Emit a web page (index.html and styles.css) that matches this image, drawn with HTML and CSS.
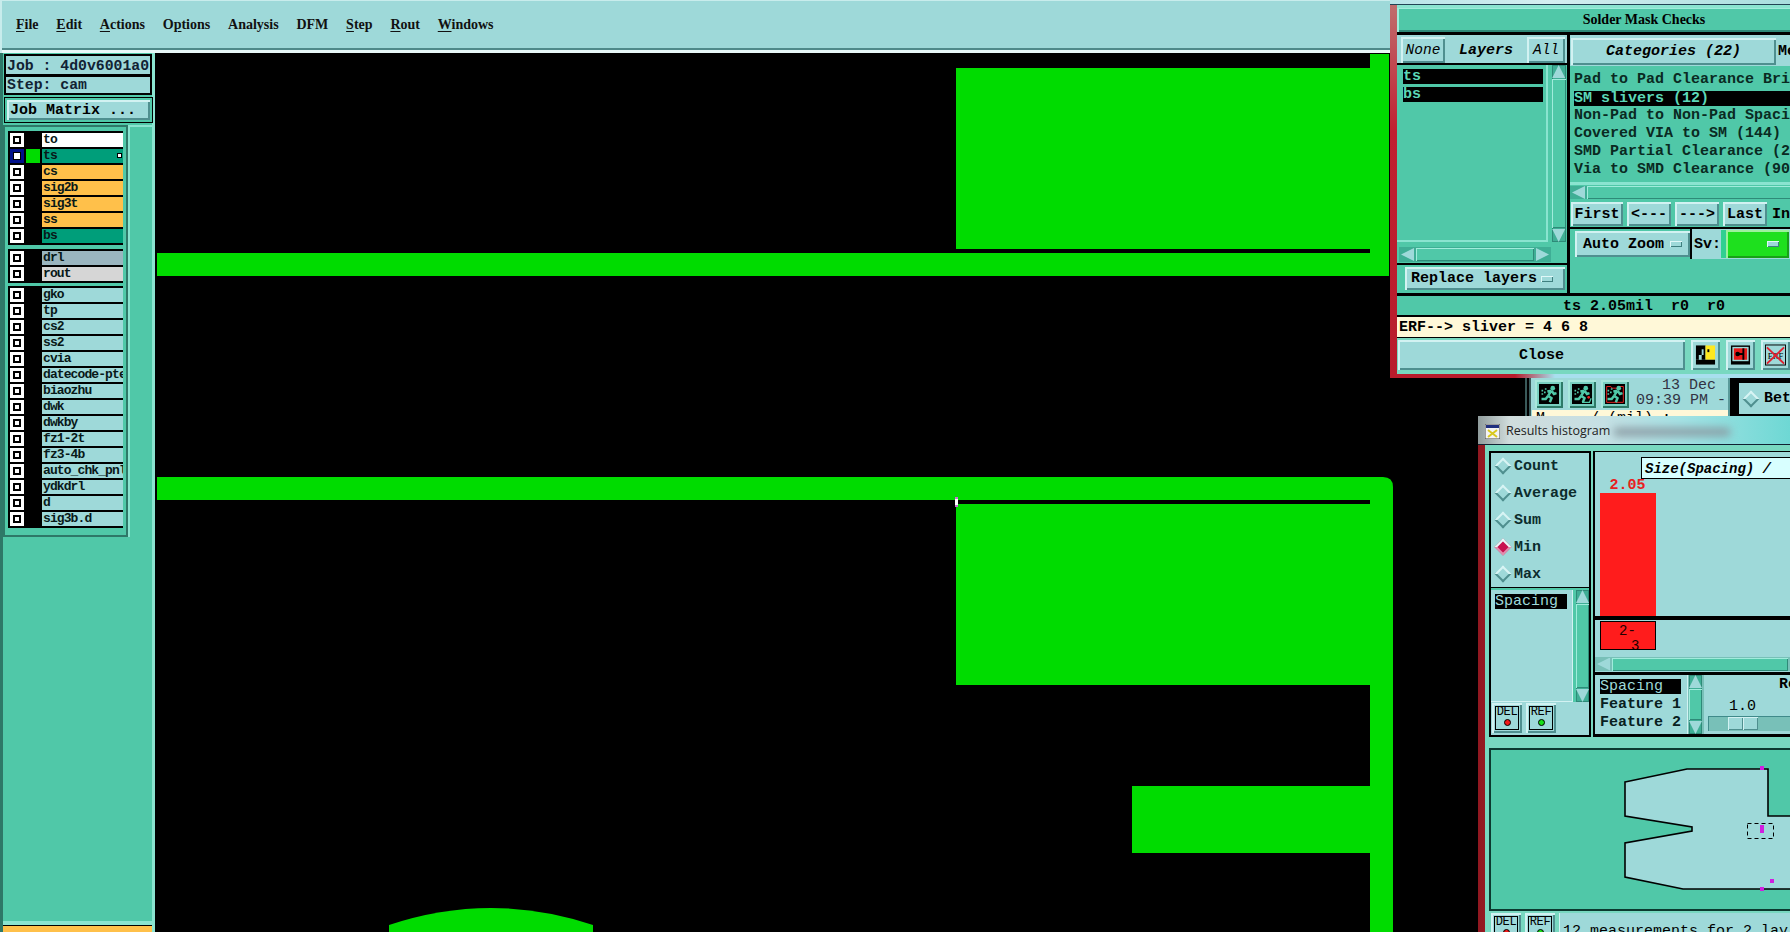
FILE: index.html
```html
<!DOCTYPE html>
<html lang="en">
<head>
<meta charset="utf-8">
<title>Solder Mask Checks</title>
<link rel="stylesheet" href="styles.css">
</head>
<body>
<svg class="defs" width="0" height="0" aria-hidden="true">
  <symbol id="runner" viewBox="0 0 24 24">
    <circle cx="16.5" cy="5" r="2.8" fill="#50c8a8"/>
    <path d="M15 8 11 14M15 8l3 4 3-1M15 8 10 9M11 14l4 3-2 5M11 14l-3 4H3" fill="none" stroke="#50c8a8" stroke-width="3"/>
    <path d="M3 7h2v2H3zM6 9h2v2H6zM3 11h2v2H3zM7 5h2v2H7z" fill="#50c8a8"/>
  </symbol>
</svg>

<div class="app">
  <header class="menubar">
    <span><u>F</u>ile</span><span><u>E</u>dit</span><span><u>A</u>ctions</span><span>O<u>p</u>tions</span><span>Analysis</span><span>DFM</span><span><u>S</u>tep</span><span><u>R</u>out</span><span><u>W</u>indows</span>
  </header>
  <aside class="sidebar">
    <div class="info">
      <div class="info-row">Job : 4d0v6001a0</div>
      <div class="info-row">Step: cam</div>
    </div>
    <div class="matrix"><div class="btn matrix-btn">Job Matrix ...</div></div>
    <div class="layers-wrap">
      <div class="layers">
        <div class="group">
          <div class="row"><i class="check"></i><i class="swatch"></i><b class="name c-white">to</b></div>
          <div class="row"><i class="check sel"></i><i class="swatch on"></i><b class="name c-teal">ts<em class="mark"></em></b></div>
          <div class="row"><i class="check"></i><i class="swatch"></i><b class="name c-orange">cs</b></div>
          <div class="row"><i class="check"></i><i class="swatch"></i><b class="name c-orange">sig2b</b></div>
          <div class="row"><i class="check"></i><i class="swatch"></i><b class="name c-orange">sig3t</b></div>
          <div class="row"><i class="check"></i><i class="swatch"></i><b class="name c-orange">ss</b></div>
          <div class="row"><i class="check"></i><i class="swatch"></i><b class="name c-teal">bs</b></div>
        </div>
        <div class="group">
          <div class="row"><i class="check"></i><i class="swatch"></i><b class="name c-slate">drl</b></div>
          <div class="row"><i class="check"></i><i class="swatch"></i><b class="name c-grey">rout</b></div>
        </div>
        <div class="group group-last">
          <div class="row"><i class="check"></i><i class="swatch"></i><b class="name">gko</b></div>
          <div class="row"><i class="check"></i><i class="swatch"></i><b class="name">tp</b></div>
          <div class="row"><i class="check"></i><i class="swatch"></i><b class="name">cs2</b></div>
          <div class="row"><i class="check"></i><i class="swatch"></i><b class="name">ss2</b></div>
          <div class="row"><i class="check"></i><i class="swatch"></i><b class="name">cvia</b></div>
          <div class="row"><i class="check"></i><i class="swatch"></i><b class="name">datecode-pte</b></div>
          <div class="row"><i class="check"></i><i class="swatch"></i><b class="name">biaozhu</b></div>
          <div class="row"><i class="check"></i><i class="swatch"></i><b class="name">dwk</b></div>
          <div class="row"><i class="check"></i><i class="swatch"></i><b class="name">dwkby</b></div>
          <div class="row"><i class="check"></i><i class="swatch"></i><b class="name">fz1-2t</b></div>
          <div class="row"><i class="check"></i><i class="swatch"></i><b class="name">fz3-4b</b></div>
          <div class="row"><i class="check"></i><i class="swatch"></i><b class="name">auto_chk_pnl</b></div>
          <div class="row"><i class="check"></i><i class="swatch"></i><b class="name">ydkdrl</b></div>
          <div class="row"><i class="check"></i><i class="swatch"></i><b class="name">d</b></div>
          <div class="row"><i class="check"></i><i class="swatch"></i><b class="name">sig3b.d</b></div>
        </div>
      </div>
      <div class="layers-side"></div>
    </div>
    <div class="side-foot"></div>
  </aside>
  <main class="canvas">
    <svg class="board" viewBox="155 53 1635 879" shape-rendering="crispEdges" aria-hidden="true">
      <g fill="#00dc00">
        <rect x="956" y="68" width="414" height="181"/>
        <rect x="1370" y="54" width="19" height="222"/>
        <rect x="157" y="253" width="1232" height="23"/>
        <path d="M157 477H1383Q1393 477 1393 487V932H1370V853H1132V786H1370V685H956V504H1370V500H157Z" shape-rendering="auto"/>
        <path d="M389 932V925Q491 891 593 925V932Z" shape-rendering="auto"/>
      </g>
      <rect x="955" y="497" width="3" height="10" fill="#c070d0"/>
      <rect x="955" y="499" width="3" height="6" fill="#fff"/>
    </svg>
  </main>
</div>

<section class="backwin">
  <div class="backstripes"></div>
  <div class="backmain">
    <div class="backtop">
      <div class="iconbtn"><svg viewBox="0 0 24 24"><rect width="24" height="24"/><use href="#runner"/></svg></div>
      <div class="iconbtn"><svg viewBox="0 0 24 24"><rect width="24" height="24"/><use href="#runner"/><path d="M12 22h9l2-5" fill="none" stroke="#50c8a8" stroke-width="1.5"/><circle cx="20" cy="16" r="1.6" fill="#f02020"/></svg></div>
      <div class="iconbtn"><svg viewBox="0 0 24 24"><rect width="24" height="24"/><path d="M2 3h5l1 2h7l1-2h6v19H2z" fill="none" stroke="#e02020" stroke-width="1.2"/><use href="#runner"/></svg></div>
      <div class="datebox"><div class="date1">13 Dec</div><div>09:39 PM -</div></div>
    </div>
    <div class="backnote">M     / (mil) :</div>
  </div>
  <div class="betw"><i class="diamond"></i><b>Betw</b></div>
</section>

<section class="solder">
  <div class="glass"></div>
  <div class="solder-in">
    <div class="title">Solder Mask Checks</div>
    <div class="solder-body">
      <div class="s-left">
        <div class="s-head">
          <div class="btn mini it">None</div>
          <div class="s-head-label">Layers</div>
          <div class="btn mini all it">All</div>
        </div>
        <div class="s-listarea">
          <div class="s-list">
            <div class="hl">ts</div>
            <div class="hl">bs</div>
          </div>
          <div class="vscroll"><i class="arr up"></i><i class="thumb"></i><i class="arr down"></i></div>
        </div>
        <div class="hscroll short"><i class="arr left"></i><i class="thumb"></i><i class="arr right"></i></div>
        <div class="replace"><div class="btn opt replace-btn">Replace layers<i class="dash"></i></div></div>
      </div>
      <div class="s-right">
        <div class="cat-head"><div class="btn cat-btn">Categories (22)</div><span class="cut">Me</span></div>
        <div class="cat-list">
          <div>Pad to Pad Clearance Bri</div>
          <div class="hl wide">SM slivers (12)</div>
          <div>Non-Pad to Non-Pad Spaci</div>
          <div>Covered VIA to SM (144)</div>
          <div>SMD Partial Clearance (2</div>
          <div>Via to SMD Clearance (90</div>
        </div>
        <div class="hscroll"><i class="arr left"></i><i class="thumb"></i></div>
        <div class="navrow">
          <div class="btn nav n1">First</div><div class="btn nav n2">&lt;---</div><div class="btn nav n2">---&gt;</div><div class="btn nav n3">Last</div><span class="cut">In</span>
        </div>
        <div class="zoomrow">
          <div class="zoomcell"><div class="btn opt zoom-btn">Auto Zoom<i class="dash"></i></div></div>
          <div class="svcell"><span>Sv:</span><div class="btn opt sv-btn"><i class="dash"></i></div></div>
        </div>
        <div class="s-fill"></div>
      </div>
    </div>
    <div class="status">ts 2.05mil  r0  r0</div>
    <div class="erf">ERF--&gt; sliver = 4 6 8</div>
    <div class="s-foot">
      <div class="btn close">Close</div>
      <div class="iconbtn big"><svg viewBox="0 0 22 22"><rect width="22" height="22" fill="#9ed9d9"/><rect x="1" y="1" width="10" height="15"/><rect x="11" y="1" width="10" height="15" fill="#ffe820"/><rect x="1" y="16" width="20" height="5"/><rect x="13" y="5" width="2" height="3"/><rect x="7" y="5" width="2" height="6" fill="#9ed9d9"/><rect x="4" y="11" width="3" height="5" fill="#9ed9d9"/></svg></div>
      <div class="iconbtn big"><svg viewBox="0 0 22 22"><rect width="22" height="22" fill="#9ed9d9"/><rect x="1" y="1" width="20" height="20"/><rect x="2.5" y="2.5" width="17" height="15" fill="#9ed9d9"/><rect x="4" y="4" width="14" height="12" fill="#e81818"/><circle cx="8" cy="10" r="2.4"/><rect x="13" y="4" width="2" height="12"/><rect x="8" y="9" width="6" height="2"/></svg></div>
      <div class="iconbtn big"><svg viewBox="0 0 22 22"><rect width="22" height="22" fill="#9ed9d9"/><rect x=".5" y=".5" width="21" height="21" fill="none" stroke="#000"/><text x="11" y="15" text-anchor="middle" class="erf-txt">ERF</text><path d="M2 3 20 20M20 3 2 20" stroke="#e02030" stroke-width="2"/></svg></div>
    </div>
  </div>
</section>

<section class="hist">
  <div class="hist-title">
    <svg class="winicon" viewBox="0 0 15 15" aria-hidden="true"><rect width="15" height="15" fill="#f4f4f4" stroke="#444"/><rect x="1" y="1" width="13" height="3" fill="#203080"/><path d="M3 6 12 13M12 6 3 13" stroke="#d8c820" stroke-width="2"/></svg>
    <span>Results histogram</span>
    <i class="blur"></i>
  </div>
  <div class="hist-in">
    <div class="hist-top">
      <div class="h-left">
        <div class="radios">
          <label class="radio"><i class="diamond"></i>Count</label>
          <label class="radio"><i class="diamond"></i>Average</label>
          <label class="radio"><i class="diamond"></i>Sum</label>
          <label class="radio"><i class="diamond on"></i>Min</label>
          <label class="radio"><i class="diamond"></i>Max</label>
        </div>
        <div class="h-listbox">
          <div class="h-listarea">
            <div class="h-list"><div class="hl-b">Spacing</div></div>
            <div class="vscroll tealbar"><i class="arr up"></i><i class="thumb"></i><i class="arr down"></i></div>
          </div>
          <div class="delref">
            <div class="tool"><div class="tool-in">DEL<i class="dot red"></i></div></div>
            <div class="tool"><div class="tool-in">REF<i class="dot green"></i></div></div>
          </div>
        </div>
      </div>
      <div class="h-right">
        <div class="chart">
          <div class="chart-title">Size(Spacing) / </div>
          <div class="bar-col">
            <div class="bar-val">2.05</div>
            <div class="bar"></div>
          </div>
        </div>
        <div class="axis"><div class="axis-cell"><span>2-</span><span class="line2">3</span></div></div>
        <div class="hscroll lightbar"><i class="arr left"></i><i class="thumb"></i></div>
        <div class="h-bottom">
          <div class="sel-list">
            <div class="hl-b">Spacing</div>
            <div>Feature 1</div>
            <div>Feature 2</div>
          </div>
          <div class="vscroll tealbar small"><i class="arr up"></i><i class="thumb"></i><i class="arr down"></i></div>
          <div class="range">
            <div class="range-top"><span class="r-head">Re</span></div>
            <div class="range-val">1.0</div>
            <div class="slider"><i class="slider-th"></i><i class="slider-th"></i></div>
          </div>
        </div>
      </div>
    </div>
    <div class="preview">
      <svg viewBox="1490 748 300 160" aria-hidden="true">
        <path d="M1625 782 1687 769H1768V816H1800V889H1683L1625 877V843L1692 831V827L1625 816Z" fill="#9ed9d9" stroke="#000" stroke-width="1.6"/>
        <rect x="1747.5" y="823.5" width="26" height="15" fill="none" stroke="#000" stroke-dasharray="4 3"/>
        <g fill="#d020e0">
          <rect x="1760" y="766" width="4" height="4"/>
          <rect x="1760" y="825" width="4" height="4"/>
          <rect x="1760" y="829" width="4" height="4"/>
          <rect x="1770" y="879" width="4" height="4"/>
          <rect x="1760" y="887" width="4" height="4"/>
        </g>
      </svg>
    </div>
    <div class="h-foot">
      <div class="tool"><div class="tool-in">DEL<i class="dot red"></i></div></div>
      <div class="tool"><div class="tool-in">REF<i class="dot green"></i></div></div>
      <div class="measure">12 measurements for 2 lay</div>
    </div>
  </div>
</section>
</body>
</html>
```
FILE: styles.css
```css
* { box-sizing: border-box; }
html, body { margin: 0; padding: 0; height: 100%; overflow: hidden; background: #000; }
body { width: 1790px; height: 932px; position: relative; font: bold 15px/1 "Liberation Mono", monospace; color: #000; }
i, em { display: block; font-style: normal; }
.defs { position: absolute; }

.app { display: grid; grid-template-columns: 155px 1fr; grid-template-rows: 53px 879px; height: 932px; }

.menubar {
  grid-column: 1 / 3; display: flex; gap: 17.8px; align-items: center;
  padding: 0 0 5px 14px; background: #9ed9d9;
  border-top: 1px solid #c8ecec; border-left: 2px solid #c8ecec;
  box-shadow: inset 0 -3px 0 #e8f8f8, inset 0 -5px 0 #4f8a8a;
  font: bold 14px/1 "Liberation Serif", serif; color: #111;
}
.menubar u { text-underline-offset: 2px; }

.btn { display: flex; align-items: center; justify-content: center; background: #9ed9d9;
  box-shadow: inset 2px 2px 0 #d2f2f2, inset -2px -2px 0 #4f8f8f; }

/* sidebar */
.sidebar { display: flex; flex-direction: column; background: #50c8a8; border-right: 3px solid #8ae4d0; border-left: 3px solid #2e7868; }
.info { margin: 1px 0 0 1px; width: 148px; border: 1px solid #000; background: #000; display: flex; flex-direction: column; gap: 1px; }
.info-row { height: 20px; padding: 2px 0 0 1px; display: flex; align-items: center; white-space: pre; background: #9ed9d9; font-size: 14.8px; border: 1px solid #000; color: #123; }
.info-row + .info-row { height: 18px; padding-top: 0; }
.matrix { margin: 2px 0 0 1px; width: 149px; height: 26px; padding: 2px; border: 1px solid #000; background: #50c8a8; }
.matrix-btn { width: 100%; height: 100%; justify-content: flex-start; padding-left: 3px; white-space: pre; }
.layers-wrap { display: flex; margin-top: 2px; }
.layers { width: 125px; height: 412px; padding: 4px 3px; display: flex; flex-direction: column; gap: 4px; background: #50c8a8; border: 2px solid #2e7868; }
.group-last { margin-top: -1px; }
.layers-side { flex: 1; background: #50c8a8; box-shadow: inset 2px 2px 0 #8ae4d0; }
.group { background: #000; padding: 1px 0 1px 2px; }
.row { display: grid; grid-template-columns: 14px 14px 81px; column-gap: 2px; height: 16px; align-items: center; }
.check { width: 14px; height: 14px; background: #fff; border: 3px solid #fff; box-shadow: inset 0 0 0 2px #000; }
.check.sel { border-color: #00108a; background: #fff; box-shadow: inset 0 0 0 1px #000; }
.swatch { width: 14px; height: 14px; background: #000; }
.swatch.on { background: #00dc00; }
.name { position: relative; height: 14px; display: block; padding-left: 1px; overflow: hidden; white-space: nowrap; background: #9ed9d9; font-size: 13px; letter-spacing: -.9px; line-height: 13px; color: #081818; }
.c-white { background: #fff; }
.c-teal { background: #009e7a; }
.c-orange { background: #ffc04a; }
.c-slate { background: #9ab5bf; }
.c-grey { background: #d6d6d6; }
.mark { position: absolute; right: 1px; top: 4px; width: 5px; height: 5px; background: #fff; border: 1px solid #000; }
.side-foot { margin-top: auto; height: 7px; background: #ffc04a; border-top: 1px solid #000; box-shadow: 0 -4px 0 #8ae4d0; }

/* canvas */
.canvas { background: #000; overflow: hidden; }
.board { display: block; width: 1635px; height: 879px; }

/* overlapping windows */
.solder { position: absolute; left: 1390px; top: 0; width: 400px; height: 378px; padding: 0 0 5px 7px; overflow: hidden;
  background: linear-gradient(90deg, #b81c2c 125px, #a8dfee 165px) bottom / 100% 5px no-repeat, linear-gradient(#c07070, #c02030 35%, #b81c2c); }
.glass { position: absolute; left: 0; right: 0; top: 0; height: 5px; background: linear-gradient(90deg, #b8e4e8, #d4eef0 40%, #a8dede); border-bottom: 1px solid #245; }
.solder-in { width: 494px; height: 373px; background: #000; display: flex; flex-direction: column; padding-top: 5px; }
.title { height: 27px; flex: none; display: flex; align-items: center; justify-content: center; background: #50c8a8;
  border-top: 3px solid #8ae4d0; box-shadow: inset 2px 1px 0 #a0ecdc, inset -2px -2px 0 #2e8a78;
  font: bold 14px/1 "Liberation Serif", serif; }
.solder-body { height: 258px; flex: none; margin-top: 3px; display: flex; gap: 3px; background: #000; }
.s-left { width: 170px; flex: none; background: #50c8a8; display: flex; flex-direction: column; }
.s-head { height: 30px; flex: none; display: flex; align-items: center; padding: 2px 2px 0 4px; background: #9ed9d9; border-bottom: 2px solid #000; }
.mini { width: 44px; height: 26px; font-weight: normal; font-size: 14.5px; }
.mini.all { width: 38px; }
.it { font-style: italic; }
.s-head-label { flex: 1; text-align: center; font-style: italic; }
.s-listarea { height: 177px; flex: none; display: flex; padding-right: 1px; }
.s-list { width: 153px; margin-right: 2px; padding: 4px 0 0 6px; background: #50c8a8; box-shadow: inset -2px -2px 0 #8ae4d0; }
.hl { background: #000; color: #5cd8b8; width: 140px; height: 15px; margin-bottom: 3px; font-weight: bold; display: flex; align-items: center; }
.vscroll { width: 14px; margin-left: 2px; display: flex; flex-direction: column; gap: 1px; background: #3fae95; box-shadow: inset 0 0 0 1px #2e8a78; }
.arr { flex: none; width: 13px; height: 13px; background: #9ed9d9; }
.arr.up { clip-path: polygon(50% 0, 100% 100%, 0 100%); }
.arr.down { clip-path: polygon(0 0, 100% 0, 50% 100%); }
.arr.left { clip-path: polygon(0 50%, 100% 0, 100% 100%); }
.arr.right { clip-path: polygon(0 0, 100% 50%, 0 100%); }
.thumb { flex: 1; background: #50c8a8; box-shadow: inset 1px 1px 0 #a0ecdc, inset -1px -1px 0 #2e8a78; }
.hscroll { display: flex; align-items: center; gap: 2px; height: 15px; flex: none; padding: 0 2px; background: #3fae95; }
.hscroll .thumb { height: 13px; }
.hscroll.short { width: 152px; margin: 5px 0 0 2px; height: 15px; }
.replace { flex: 1; margin-top: 1px; padding: 2px 2px 3px 8px; border-top: 2px solid #000; background: #50c8a8; }
.opt { justify-content: space-between; padding: 0 12px 0 6px; white-space: pre; }
.replace-btn { height: 100%; }
.dash { flex: none; width: 12px; height: 6px; background: #9ed9d9; box-shadow: inset 1px 1px 0 #e0f8f8, inset -1px -1px 0 #3f7f7f; }
.s-right { flex: 1; min-width: 0; background: #50c8a8; display: flex; flex-direction: column; overflow: hidden; }
.cat-head { height: 31px; flex: none; display: flex; align-items: center; gap: 2px; padding: 2px 0 0 1px; background: #9ed9d9; }
.cat-btn { width: 205px; height: 27px; flex: none; font-style: italic; }
.cut { white-space: pre; }
.cat-list { height: 119px; flex: none; padding: 5px 0 0 4px; box-shadow: inset 0 -3px 0 #8ae4d0; white-space: nowrap; font-weight: bold; color: #0a2a22; }
.cat-list div { height: 18px; line-height: 18px; }
.cat-list .hl.wide { width: 300px; height: 15px; margin: 2px 0 1px; color: #5cd8b8; line-height: 15px; }
.s-right .hscroll { margin-top: 1px; width: 100%; height: 13px; background: #3fae95; }
.navrow { height: 28px; flex: none; margin-top: 2px; display: flex; align-items: center; gap: 4px; padding-left: 1px; background: #50c8a8; border-bottom: 2px solid #000; }
.nav { height: 24px; flex: none; }
.n1 { width: 52px; }
.n2 { width: 44px; }
.n3 { width: 44px; }
.navrow .cut { margin-left: 1px; }
.zoomrow { height: 30px; flex: none; display: flex; background: #000; gap: 2px; }
.zoomcell { width: 120px; flex: none; padding: 2px 0 2px 5px; background: #50c8a8; }
.zoom-btn { width: 115px; height: 100%; padding: 0 8px; }
.svcell { flex: 1; display: flex; align-items: center; background: #9ed9d9; padding-left: 2px; }
.sv-btn { flex: none; width: 63px; height: 28px; margin-left: 5px; background: #1ee01e; justify-content: flex-end; padding: 0 10px 0 0; box-shadow: -5px 0 0 #30d090, inset 2px 2px 0 #9df09d, inset -2px -2px 0 #18a018; }
.s-fill { flex: 1; margin-top: 2px; }
.status { height: 19px; flex: none; margin-top: 3px; padding-top: 1px; display: flex; align-items: center; justify-content: center; white-space: pre; background: #50c8a8; }
.erf { height: 20px; flex: none; margin-top: 2px; padding-left: 2px; display: flex; align-items: center; background: #fff8d8; white-space: pre; }
.s-foot { flex: 1; display: flex; gap: 6px; padding: 2px 0 4px 0; background: #78d8c0; margin-top: 1px; }
.close { width: 287px; margin-left: 1px; flex: none; }
.iconbtn { width: 28px; height: 28px; padding: 4px; flex: none; background: #78cfc0; box-shadow: inset 2px 2px 0 #a8e8dc, inset -2px -2px 0 #2e7a68; }
.iconbtn svg { display: block; width: 100%; height: 100%; }
.iconbtn.big { width: 29px; height: 30px; background: #9ed9d9; box-shadow: inset 2px 2px 0 #d2f2f2, inset -2px -2px 0 #4f8f8f; }
.erf-txt { font: normal 9px "Liberation Serif", serif; fill: #000; }

.backwin { position: absolute; left: 1523px; top: 378px; width: 267px; height: 44px; display: flex; background: #000; overflow: hidden; }
.backstripes { width: 8px; background: repeating-linear-gradient(90deg, #000 0 2px, #3a5a5a 2px 4px); }
.backmain { width: 199px; background: #9ed9d9; display: flex; flex-direction: column; border-right: 2px solid #5a9a9a; }
.backtop { height: 32px; display: flex; gap: 5px; padding: 2px 0 0 4px; }
.datebox { flex: 1; margin-top: -2px; font-weight: normal; font-size: 15px; line-height: 15px; color: #334; text-align: right; padding-right: 2px; white-space: pre; }
.date1 { padding-right: 10px; }
.backnote { flex: 1; background: #fff8d8; margin: 2px 0 0 1px; font-weight: normal; padding: 1px 0 0 4px; white-space: pre; }
.betw { flex: 1; margin: 3px 0 6px 7px; display: flex; align-items: center; gap: 7px; padding-left: 6px; background: #9ed9d9; border: 2px solid #000; border-right: 0; overflow: hidden; }

.diamond { width: 12px; height: 12px; flex: none; transform: rotate(45deg); background: #9ed9d9; border: 2px solid; border-color: #d8f4f4 #4f8f8f #4f8f8f #d8f4f4; }
.diamond.on { background: #c8104f; border-color: #e8f8f8 #e090b0 #e090b0 #e8f8f8; }

.hist { position: absolute; left: 1478px; top: 416px; width: 312px; height: 516px; padding-left: 7px;
  background: linear-gradient(90deg, #901820, #d03040 35%, #b01c2c); display: flex; flex-direction: column; }
.hist-title { position: absolute; left: 0; top: 0; right: 0; height: 29px; display: flex; align-items: center; gap: 6px; padding: 2px 0 0 7px;
  background: linear-gradient(90deg, #909c9c, #d0dcdc 10%, #c6e0e4 40%, #a4e2e4 65%, #6ed8d4); border-bottom: 1px solid #123;
  font: normal 12.5px/1 "Open Sans", "Noto Sans", sans-serif; color: #222; overflow: hidden; }
.winicon { width: 15px; height: 15px; flex: none; }
.blur { position: absolute; left: 136px; top: 12px; width: 116px; height: 8px; background: #8a9aa2; filter: blur(4px); }
.hist-in { flex: 1; margin-top: 29px; background: #78d8c0; padding-top: 6px; display: flex; flex-direction: column; }
.hist-top { height: 286px; flex: none; margin-left: 4px; display: flex; gap: 2px; }
.h-left { width: 102px; flex: none; display: flex; flex-direction: column; }
.radios { height: 137px; flex: none; padding: 1px 0 0 6px; background: #9ed9d9; border: 2px solid #000; border-bottom-width: 1px; display: flex; flex-direction: column; gap: 3px; }
.radio { height: 24px; flex: none; display: flex; align-items: center; gap: 5px; color: #0c2c2c; }
.h-listbox { flex: 1; display: flex; flex-direction: column; background: #9ed9d9; border: 2px solid #000; border-top: 0; }
.h-listarea { height: 114px; flex: none; display: flex; padding-top: 2px; background: #50c8a8; }
.h-list { width: 82px; padding: 4px 0 0 4px; background: #9ed9d9; box-shadow: inset -1px -1px 0 #d2f2f2; }
.hl-b { background: #000; color: #9ed9d9; height: 15px; display: flex; align-items: center; white-space: pre; }
.h-list .hl-b { width: 72px; font-weight: normal; }
.tealbar { margin-left: 3px; width: 13px; }
.delref { display: flex; gap: 4px; padding: 1px 0 0 1px; }
.tool { width: 30px; height: 30px; padding: 3px; flex: none; background: #9ed9d9; box-shadow: inset 2px 2px 0 #d2f2f2, inset -2px -2px 0 #4f8f8f; }
.tool-in { height: 100%; display: flex; flex-direction: column; align-items: center; border: 1px solid #000; font: normal 12px/11px "Liberation Mono", monospace; letter-spacing: -.3px; overflow: hidden; }
.dot { width: 7px; height: 7px; margin-top: 1px; border-radius: 50%; border: 1px solid #000; }
.red { background: #f01818; }
.green { background: #18e018; }
.h-right { flex: 1; min-width: 0; display: flex; flex-direction: column; background: #9ed9d9; border-left: 2px solid #000; border-top: 1px solid #000; overflow: hidden; }
.chart { height: 168px; flex: none; position: relative; border-bottom: 4px solid #000; display: flex; align-items: flex-end; padding-left: 5px; }
.chart-title { position: absolute; left: 46px; top: 5px; width: 300px; height: 22px; padding: 2px 0 0 3px; background: #d8ffff; border: 1px solid #000; border-right: 0; display: flex; align-items: center; white-space: pre; font-style: italic; font-size: 14px; }
.bar-col { width: 56px; display: flex; flex-direction: column; }
.bar-val { height: 15px; color: #e82020; text-align: center; padding-right: 1px; }
.bar { height: 123px; background: #ff1c1c; }
.axis { height: 31px; flex: none; padding: 1px 0 0 5px; }
.axis-cell { width: 56px; height: 29px; position: relative; background: #ff1c1c; border: 1px solid #000; overflow: hidden; font-weight: normal; font-size: 14px; color: #200; padding: 2px 0 0 18px; }
.line2 { display: block; margin: 1px 0 0 12px; }
.hscroll.lightbar { margin-top: 6px; height: 14px; background: #78c0b8; }
.h-bottom { flex: 1; display: flex; margin-top: 1px; border-top: 3px solid #000; border-bottom: 3px solid #000; background: #78c0b8; }
.sel-list { width: 93px; flex: none; padding: 4px 0 0 5px; background: #9ed9d9; box-shadow: inset -1px 0 0 #d2f2f2; color: #082020; }
.sel-list div { height: 18px; line-height: 18px; white-space: pre; }
.sel-list .hl-b { height: 15px; width: 81px; margin-bottom: 2px; font-weight: normal; line-height: 15px; }
.vscroll.small { margin-left: 1px; }
.range { flex: 1; margin-left: 2px; display: flex; flex-direction: column; background: #9ed9d9; overflow: hidden; }
.range-top { height: 22px; text-align: right; line-height: 20px; overflow: hidden; }
.r-head { display: inline-block; margin-right: -7px; }
.range-val { height: 19px; padding-left: 25px; line-height: 19px; font-weight: normal; }
.slider { height: 15px; display: flex; padding: 1px 0 1px 20px; margin-left: 4px; background: #78c0b8; box-shadow: inset 1px 1px 0 #3f8a8a; }
.slider-th { width: 15px; background: #9ed9d9; box-shadow: inset 1px 1px 0 #d2f2f2, inset -1px -1px 0 #4f8f8f; }
.preview { height: 163px; flex: none; margin: 11px 0 0 4px; background: #50c8a8; border: solid #0c3a30; border-width: 2px 0 2px 2px; overflow: hidden; }
.preview svg { display: block; width: 300px; height: 160px; margin: -2px 0 0 -1px; }
.h-foot { flex: 1; display: flex; gap: 4px; margin: 2px 0 0 6px; }
.measure { flex: 1; padding: 11px 0 0 3px; background: #9ed9d9; font-weight: normal; overflow: hidden; white-space: pre; border-left: 1px solid #d2f2f2; }
```
